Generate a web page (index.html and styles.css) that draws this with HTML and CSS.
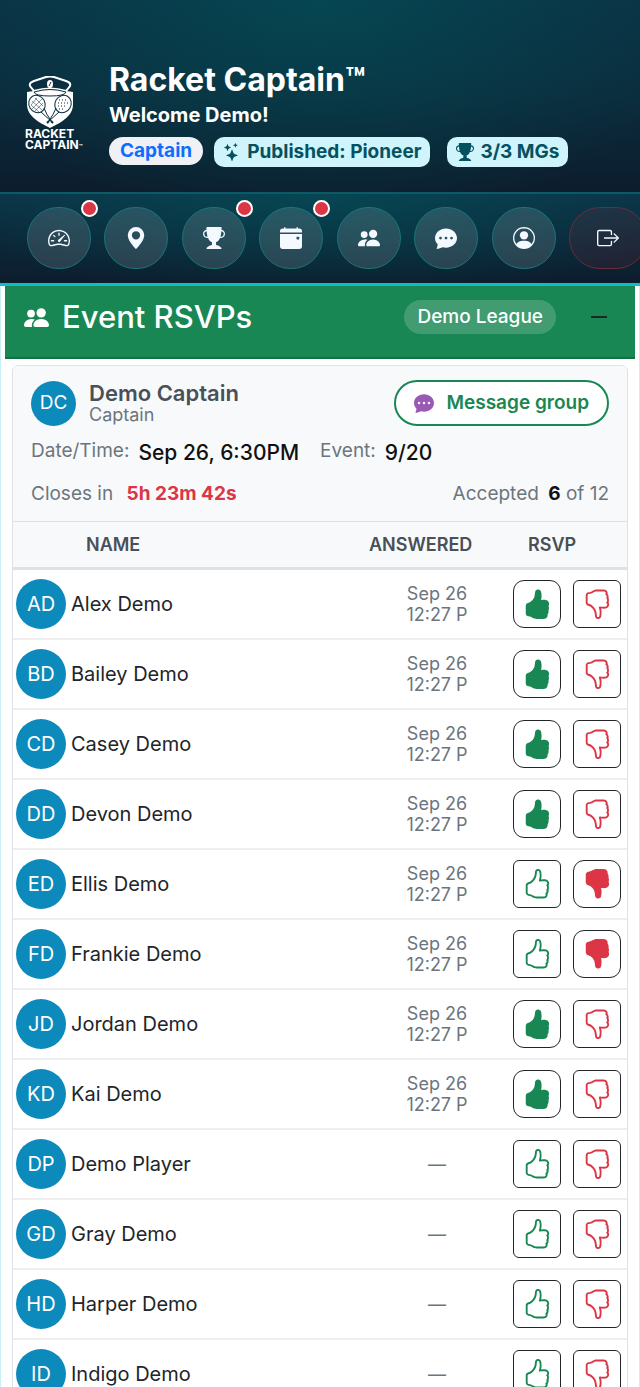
FILE: index.html
```html
<!DOCTYPE html>
<html lang="en">
<head>
    <meta charset="utf-8">
    <meta name="viewport" content="width=device-width, initial-scale=1.0">
    <title>Racket Captain</title>
    <link rel="stylesheet" href="styles.css">
</head>
<body>
    <!-- icon sprite -->
    <svg class="sprite" aria-hidden="true">
        <symbol id="i-stars" viewBox="0 0 16 16"><path d="M7.657 6.247c.11-.33.576-.33.686 0l.645 1.937a2.89 2.89 0 0 0 1.829 1.828l1.936.645c.33.11.33.576 0 .686l-1.937.645a2.89 2.89 0 0 0-1.828 1.829l-.645 1.936a.361.361 0 0 1-.686 0l-.645-1.937a2.89 2.89 0 0 0-1.828-1.828l-1.937-.645a.361.361 0 0 1 0-.686l1.937-.645a2.89 2.89 0 0 0 1.828-1.828zM3.794 1.148a.217.217 0 0 1 .412 0l.387 1.162c.173.518.579.924 1.097 1.097l1.162.387a.217.217 0 0 1 0 .412l-1.162.387A1.73 1.73 0 0 0 4.593 5.69l-.387 1.162a.217.217 0 0 1-.412 0L3.407 5.69A1.73 1.73 0 0 0 2.31 4.593l-1.162-.387a.217.217 0 0 1 0-.412l1.162-.387A1.73 1.73 0 0 0 3.407 2.31zM10.863.099a.145.145 0 0 1 .274 0l.258.774c.115.346.386.617.732.732l.774.258a.145.145 0 0 1 0 .274l-.774.258a1.16 1.16 0 0 0-.732.732l-.258.774a.145.145 0 0 1-.274 0l-.258-.774a1.16 1.16 0 0 0-.732-.732L9.1 2.137a.145.145 0 0 1 0-.274l.774-.258c.346-.115.617-.386.732-.732z"/></symbol>
        <symbol id="i-trophy" viewBox="0 0 16 16"><path d="M2.5.5A.5.5 0 0 1 3 0h10a.5.5 0 0 1 .5.5q0 .807-.034 1.536a3 3 0 1 1-1.133 5.89c-.79 1.865-1.878 2.777-2.833 3.011v2.173l1.425.356c.194.048.377.135.537.255L13.3 15.1a.5.5 0 0 1-.3.9H3a.5.5 0 0 1-.3-.9l1.838-1.379c.16-.12.343-.207.537-.255L6.5 13.11v-2.173c-.955-.234-2.043-1.146-2.833-3.012a3 3 0 1 1-1.132-5.89A33 33 0 0 1 2.5.5m.099 2.54a2 2 0 0 0 .72 3.935c-.333-1.05-.588-2.346-.72-3.935m10.083 3.935a2 2 0 0 0 .72-3.935c-.133 1.59-.388 2.885-.72 3.935"/></symbol>
        <symbol id="i-speed" viewBox="0 0 16 16"><path d="M8 4a.5.5 0 0 1 .5.5V6a.5.5 0 0 1-1 0V4.5A.5.5 0 0 1 8 4M3.732 5.732a.5.5 0 0 1 .707 0l.915.914a.5.5 0 1 1-.708.708l-.914-.915a.5.5 0 0 1 0-.707M2 10a.5.5 0 0 1 .5-.5h1.586a.5.5 0 0 1 0 1H2.5A.5.5 0 0 1 2 10m9.5 0a.5.5 0 0 1 .5-.5h1.5a.5.5 0 0 1 0 1H12a.5.5 0 0 1-.5-.5m.754-4.246a.39.39 0 0 0-.527-.02L7.547 9.31a.91.91 0 1 0 1.302 1.258l3.434-4.297a.39.39 0 0 0-.029-.518z"/><path fill-rule="evenodd" d="M0 10a8 8 0 1 1 15.547 2.661c-.442 1.253-1.845 1.602-2.932 1.25C11.309 13.488 9.475 13 8 13c-1.474 0-3.31.488-4.615.911-1.087.352-2.49.003-2.932-1.25A8 8 0 0 1 0 10m8-7a7 7 0 0 0-6.603 9.329c.203.575.923.876 1.68.63C4.397 12.533 6.358 12 8 12s3.604.532 4.923.96c.757.245 1.477-.056 1.68-.631A7 7 0 0 0 8 3"/></symbol>
        <symbol id="i-geo" viewBox="0 0 16 16"><path d="M8 16s6-5.686 6-10A6 6 0 0 0 2 6c0 4.314 6 10 6 10m0-7a3 3 0 1 1 0-6 3 3 0 0 1 0 6"/></symbol>
        <symbol id="i-calendar" viewBox="0 0 16 16"><path d="M4 .5a.5.5 0 0 0-1 0V1H2a2 2 0 0 0-2 2v1h16V3a2 2 0 0 0-2-2h-1V.5a.5.5 0 0 0-1 0V1H4zM16 14V5H0v9a2 2 0 0 0 2 2h12a2 2 0 0 0 2-2m-3.5-7h1a.5.5 0 0 1 .5.5v1a.5.5 0 0 1-.5.5h-1a.5.5 0 0 1-.5-.5v-1a.5.5 0 0 1 .5-.5"/></symbol>
        <symbol id="i-people" viewBox="0 0 16 16"><path d="M7 14s-1 0-1-1 1-4 5-4 5 3 5 4-1 1-1 1zm4-6a3 3 0 1 0 0-6 3 3 0 0 0 0 6m-5.784 6A2.24 2.24 0 0 1 5 13c0-1.355.68-2.75 1.936-3.72A6.3 6.3 0 0 0 5 9c-4 0-5 3-5 4s1 1 1 1zM4.5 8a2.5 2.5 0 1 0 0-5 2.5 2.5 0 0 0 0 5"/></symbol>
        <symbol id="i-chat" viewBox="0 0 16 16"><path d="M16 8c0 3.866-3.582 7-8 7a9 9 0 0 1-2.347-.306c-.584.296-1.925.864-4.181 1.234-.2.032-.352-.176-.273-.362.354-.836.674-1.95.77-2.966C.744 11.37 0 9.76 0 8c0-3.866 3.582-7 8-7s8 3.134 8 7M5 8a1 1 0 1 0-2 0 1 1 0 0 0 2 0m4 0a1 1 0 1 0-2 0 1 1 0 0 0 2 0m3 1a1 1 0 1 0 0-2 1 1 0 0 0 0 2"/></symbol>
        <symbol id="i-person" viewBox="0 0 16 16"><path d="M11 6a3 3 0 1 1-6 0 3 3 0 0 1 6 0"/><path fill-rule="evenodd" d="M0 8a8 8 0 1 1 16 0A8 8 0 0 1 0 8m8-7a7 7 0 0 0-5.468 11.37C3.242 11.226 4.805 10 8 10s4.757 1.225 5.468 2.37A7 7 0 0 0 8 1"/></symbol>
        <symbol id="i-logout" viewBox="0 0 16 16"><path d="M10 12.5a.5.5 0 0 1-.5.5h-8a.5.5 0 0 1-.5-.5v-9a.5.5 0 0 1 .5-.5h8a.5.5 0 0 1 .5.5v2a.5.5 0 0 0 1 0v-2A1.5 1.5 0 0 0 9.5 2h-8A1.5 1.5 0 0 0 0 3.5v9A1.5 1.5 0 0 0 1.5 14h8a1.5 1.5 0 0 0 1.5-1.5v-2a.5.5 0 0 0-1 0z"/><path d="M15.854 8.354a.5.5 0 0 0 0-.708l-3-3a.5.5 0 0 0-.708.708L14.293 7.5H5.5a.5.5 0 0 0 0 1h8.793l-2.147 2.146a.5.5 0 0 0 .708.708z"/></symbol>
        <symbol id="i-thumb" viewBox="0 0 16 16"><path d="M8.864.046C7.908-.193 7.02.53 6.956 1.466c-.072 1.051-.23 2.016-.428 2.59-.125.36-.479 1.013-1.04 1.639-.557.623-1.282 1.178-2.131 1.41C2.685 7.288 2 7.87 2 8.72v4.001c0 .845.682 1.464 1.448 1.545 1.07.114 1.564.415 2.068.723l.048.03c.272.165.578.348.97.484.397.136.861.217 1.466.217h3.5c.937 0 1.599-.477 1.934-1.064a1.86 1.86 0 0 0 .254-.912c0-.152-.023-.312-.077-.464.201-.263.38-.578.488-.901.11-.33.172-.762.004-1.149.069-.13.12-.269.159-.403.077-.27.113-.568.113-.857 0-.288-.036-.585-.113-.856a2 2 0 0 0-.138-.362 1.9 1.9 0 0 0 .234-1.734c-.206-.592-.682-1.1-1.2-1.272-.847-.282-1.803-.276-2.516-.211a10 10 0 0 0-.443.05 9.4 9.4 0 0 0-.062-4.509A1.38 1.38 0 0 0 9.125.111zM11.5 14.721H8c-.51 0-.863-.069-1.14-.164-.281-.097-.506-.228-.776-.393l-.04-.024c-.555-.339-1.198-.731-2.49-.868-.333-.036-.554-.29-.554-.55V8.72c0-.254.226-.543.62-.65 1.095-.3 1.977-.996 2.614-1.708.635-.71 1.064-1.475 1.238-1.978.243-.7.407-1.768.482-2.85.025-.362.36-.594.667-.518l.262.066c.16.04.258.143.288.255a8.34 8.34 0 0 1-.145 4.725.5.5 0 0 0 .595.644l.003-.001.014-.003.058-.014a9 9 0 0 1 1.036-.157c.663-.06 1.457-.054 2.11.164.175.058.45.3.57.65.107.308.087.67-.266 1.022l-.353.353.353.354c.043.043.105.141.154.315.048.167.075.37.075.581 0 .212-.027.414-.075.582-.05.174-.111.272-.154.315l-.353.353.353.354c.047.047.109.177.005.488a2.2 2.2 0 0 1-.505.805l-.353.353.353.354c.006.005.041.05.041.17a.9.9 0 0 1-.121.416c-.165.288-.503.56-1.066.56z"/></symbol>
        <symbol id="i-thumb-fill" viewBox="0 0 16 16"><path d="M6.956 1.745C7.021.81 7.908.087 8.864.325l.261.066c.463.116.874.456 1.012.965.22.816.533 2.511.062 4.51a10 10 0 0 1 .443-.051c.713-.065 1.669-.072 2.516.21.518.173.994.681 1.2 1.273.184.532.16 1.162-.234 1.733q.086.18.138.363c.077.27.113.567.113.856s-.036.586-.113.856c-.039.135-.09.273-.16.404.169.387.107.819-.003 1.148a3.2 3.2 0 0 1-.488.901c.054.152.076.312.076.465 0 .305-.089.625-.253.912C13.1 15.522 12.437 16 11.5 16H8c-.605 0-1.07-.081-1.466-.218a4.8 4.8 0 0 1-.97-.484l-.048-.03c-.504-.307-.999-.609-2.068-.722C2.682 14.464 2 13.846 2 13V9c0-.85.685-1.432 1.357-1.615.849-.232 1.574-.787 2.132-1.41.56-.627.914-1.28 1.039-1.639.199-.575.356-1.539.428-2.59z"/></symbol>
    </svg>

    <header class="top">
        <div class="logo">
            <svg class="logo-mark" viewBox="0 0 48 52" aria-hidden="true">
                <path d="M1 16q23-5 46 0v12c0 12-11 18-23 24C12 46 1 40 1 28z" fill="#fff"/>
                <path d="M4 10C3 7 5 6 8 5l12-4q4-1 8 0l12 4c3 1 5 2 4 5l-4 5q-16-5-32 0z" fill="#0b2f40" stroke="#fff" stroke-width="2"/>
                <path d="M8 16q16-5 32 0-1 4-16 4T8 16z" fill="#fff" stroke="#0b2c3d"/>
                <ellipse cx="24" cy="8" rx="3" ry="4" fill="#fff"/>
                <path d="m25 6-2 4" stroke="#0b2c3d"/>
                <g fill="none" stroke="#0b2c3d">
                    <ellipse cx="11" cy="28" rx="8" ry="9" transform="rotate(-30 11 28)"/>
                    <ellipse cx="37" cy="28" rx="8" ry="9" transform="rotate(30 37 28)"/>
                    <path d="M15 36l11 10M18 32q2 6 8 14M33 36l-11 10M30 32q-2 6-8 14"/>
                    <path d="m6 25 10 9M5 29l8 7M9 22l8 8M6 33l10-10M9 35l8-8M5 29l6-7" stroke-width=".5"/>
                    <path d="M33 24h8M32 27h10M32 30h9M33 33h6" stroke-dasharray="1 2"/>
                    <path d="m25 45 2 2M23 45l-2 2" stroke-width="2"/>
                </g>
            </svg>
            <div class="logo-text">RACKET<br>CAPTAIN<span class="tm">™</span></div>
        </div>
        <div class="intro">
            <h1>Racket Captain™</h1>
            <p class="welcome">Welcome Demo!</p>
            <div class="tags">
                <span class="tag tag-role">Captain</span>
                <span class="tag tag-info"><svg><use href="#i-stars"/></svg>Published: Pioneer</span>
                <span class="tag tag-info tag-mg"><svg><use href="#i-trophy"/></svg>3/3 MGs</span>
            </div>
        </div>
    </header>

    <nav class="nav">
        <div class="nav-row">
            <a href="#" class="nav-btn" aria-label="Dashboard"><svg><use href="#i-speed"/></svg><span class="dot"></span></a>
            <a href="#" class="nav-btn" aria-label="Locations"><svg><use href="#i-geo"/></svg></a>
            <a href="#" class="nav-btn" aria-label="Leagues"><svg><use href="#i-trophy"/></svg><span class="dot"></span></a>
            <a href="#" class="nav-btn" aria-label="Events"><svg><use href="#i-calendar"/></svg><span class="dot"></span></a>
            <a href="#" class="nav-btn" aria-label="Players"><svg><use href="#i-people"/></svg></a>
            <a href="#" class="nav-btn" aria-label="Messages"><svg><use href="#i-chat"/></svg></a>
            <a href="#" class="nav-btn" aria-label="Profile"><svg><use href="#i-person"/></svg></a>
            <a href="#" class="nav-btn nav-logout" aria-label="Log out"><svg><use href="#i-logout"/></svg></a>
        </div>
    </nav>

    <main class="page">
        <div class="panel-head">
            <svg><use href="#i-people"/></svg>
            <h2>Event RSVPs</h2>
            <span class="league">Demo League</span>
            <button type="button" class="collapse" aria-label="Collapse"></button>
        </div>

        <section class="card">
            <div class="card-head">
                <div class="captain">
                    <span class="avatar avatar-sm">DC</span>
                    <div class="captain-name">
                        <strong>Demo Captain</strong>
                        <span>Captain</span>
                    </div>
                    <button type="button" class="msg-btn"><svg><use href="#i-chat"/></svg>Message group</button>
                </div>
                <div class="facts">
                    <span class="label">Date/Time:</span><span class="value">Sep 26, 6:30PM</span>
                    <span class="label label-event">Event:</span><span class="value">9/20</span>
                </div>
                <div class="status">
                    <span>Closes in <b class="timer">5h 23m 42s</b></span>
                    <span>Accepted <b class="count">6</b> of 12</span>
                </div>
            </div>
            <table class="rsvp">
                <thead>
                    <tr>
                        <th class="col-avatar"></th>
                        <th class="col-name">NAME</th>
                        <th class="col-answered">ANSWERED</th>
                        <th class="col-rsvp">RSVP</th>
                    </tr>
                </thead>
                <tbody id="players"></tbody>
            </table>
        </section>
    </main>

    <script src="script.js"></script>
</body>
</html>
```
FILE: styles.css
```css
* {
    box-sizing: border-box;
}
body {
    margin: 0;
    font-family: Inter, "Liberation Sans", sans-serif;
    font-size: 20px;
    line-height: 24px;
    color: #212529;
    background: #fff;
    overflow-x: hidden;
}
svg {
    fill: currentColor;
    flex: none;
}
h1, h2, p {
    margin: 0;
}
.sprite {
    display: none;
}

/* header */
.top {
    display: flex;
    gap: 26px;
    padding: 61px 24px 25px;
    color: #fff;
    background: radial-gradient(ellipse at 50% 0, rgba(0, 90, 95, .5), transparent 85%), linear-gradient(#0a3245, #0b2c3d 50%, #0c1d2d);
}
.logo {
    width: 59px;
    padding-top: 15px;
}
.logo-mark {
    display: block;
    width: 48px;
    height: 52px;
    margin-left: 2px;
}
.logo-text {
    margin-left: 1px;
    font-size: 12px;
    line-height: 11px;
    font-weight: 700;
    white-space: nowrap;
}
.tm {
    font-size: 6px;
}
h1 {
    font-size: 32px;
    line-height: 38px;
    font-weight: 700;
}
.welcome {
    font-weight: 700;
    line-height: 24px;
    margin: 4px 0 10px;
}
.tags {
    display: flex;
    align-items: flex-start;
    gap: 11px;
    font-size: 19px;
    font-weight: 700;
    white-space: nowrap;
}
.tag {
    display: flex;
    align-items: center;
    gap: 6px;
    height: 30px;
    padding: 0 9px;
    border-radius: 10px;
}
.tag svg {
    width: 18px;
    height: 18px;
}
.tag-role {
    height: 28px;
    padding: 0 11px;
    border-radius: 14px;
    color: #0d6efd;
    background: #f0f1f4;
}
.tag-info {
    color: #055160;
    background: #cff4fc;
}
.tag-mg {
    margin-left: 6px;
}

/* icon nav */
.nav {
    overflow: hidden;
    border-top: 2px solid #0c5968;
    border-bottom: 3px solid #0fbcc8;
    background: radial-gradient(ellipse at 50% 0, rgba(0, 90, 95, .5), transparent 85%), linear-gradient(#0b3347, #0c1d2d);
}
.nav-row {
    display: flex;
    justify-content: space-between;
    margin-right: -7px;
    padding: 13px 0 14px 27px;
}
.nav-btn {
    position: relative;
    display: flex;
    align-items: center;
    justify-content: center;
    flex: none;
    width: 64px;
    height: 62px;
    border: 1px solid #1a7479;
    border-radius: 32px;
    color: #f4f8ff;
    background: rgba(255, 255, 255, .13);
}
.nav-btn svg {
    width: 22px;
    height: 22px;
}
.nav-logout {
    width: 78px;
    border-color: #6a2c3e;
    background: rgba(220, 53, 69, .1);
}
.dot {
    position: absolute;
    top: -8px;
    right: -8px;
    width: 17px;
    height: 17px;
    border: 2px solid #fff;
    border-radius: 50%;
    background: #dc3545;
}

/* event panel */
.page {
    padding: 0 4px;
    border-left: 1px solid #c9f0f8;
    border-right: 1px solid #c9f0f8;
}
.panel-head {
    display: flex;
    align-items: center;
    height: 73px;
    padding: 0 28px 9px 19px;
    color: #fff;
    background: #198754;
    border-bottom: 2px solid #14713f;
}
.panel-head svg {
    width: 25px;
    height: 25px;
}
h2 {
    flex: 1;
    margin-left: 13px;
    font-size: 31px;
    line-height: 38px;
    font-weight: 500;
}
.league {
    padding: 5px 13px;
    border-radius: 17px;
    font-size: 19px;
    font-weight: 500;
    background: rgba(255, 255, 255, .18);
}
.collapse {
    width: 16px;
    height: 2px;
    margin-left: 35px;
    padding: 0;
    border: 0;
    background: #212529;
}
.card {
    margin: 6px 7px 0;
    border: 1px solid #dee2e6;
    border-radius: 6px;
}
.card-head {
    padding: 14px 18px 15px;
    font-size: 19px;
    color: #6c757d;
    background: #f8f9fb;
    border-bottom: 1px solid #dee2e6;
    border-radius: 6px 6px 0 0;
}
.captain {
    display: flex;
    align-items: center;
}
.avatar {
    display: flex;
    align-items: center;
    justify-content: center;
    width: 50px;
    height: 50px;
    border-radius: 50%;
    color: #fff;
    background: #0d8abc;
}
.avatar-sm {
    width: 45px;
    height: 45px;
}
.captain-name {
    display: flex;
    flex-direction: column;
    flex: 1;
    margin-left: 13px;
}
.captain-name strong {
    font-size: 22px;
    font-weight: 600;
    color: #495057;
}
.captain-name span {
    font-size: 18px;
    line-height: 20px;
}
.msg-btn {
    display: flex;
    align-items: center;
    gap: 12px;
    height: 46px;
    padding: 0 18px;
    border: 2px solid #198754;
    border-radius: 23px;
    font: inherit;
    font-weight: 600;
    color: #198754;
    background: #fff;
}
.msg-btn svg {
    width: 20px;
    height: 20px;
    color: #9b59b6;
}
.facts {
    display: flex;
    align-items: flex-start;
    margin-top: 13px;
}
.value {
    margin-left: 9px;
    font-size: 21px;
    line-height: 28px;
    font-weight: 500;
    color: #111;
}
.label-event {
    margin-left: 21px;
}
.status {
    display: flex;
    justify-content: space-between;
    margin-top: 15px;
}
.timer {
    margin-left: 8px;
    font-weight: 700;
    color: #dc3545;
}
.count {
    margin-left: 4px;
    color: #111;
}

/* rsvp table */
.rsvp {
    width: 100%;
    table-layout: fixed;
    border-collapse: separate;
    border-spacing: 0;
}
.rsvp th {
    height: 48px;
    padding: 0 15px;
    font-size: 18px;
    font-weight: 600;
    text-align: left;
    color: #495057;
    background: #f8f9fb;
    border-bottom: 3px solid #dee2e6;
}
.rsvp td {
    height: 70px;
    padding: 0;
    border-bottom: 2px solid #eceef0;
}
.rsvp .col-avatar {
    width: 57px;
    padding: 0 0 0 3px;
}
.rsvp th.col-name {
    padding: 0 16px;
}
.rsvp th.col-answered {
    width: 152px;
    padding: 0 8px;
}
.rsvp .col-rsvp {
    width: 114px;
}
.rsvp td.name {
    padding-left: 1px;
}
.answered {
    font-size: 18px;
    line-height: 21px;
    text-align: center;
    color: #6c757d;
}
.votes {
    display: flex;
    gap: 12px;
}
.vote {
    display: flex;
    align-items: center;
    justify-content: center;
    width: 48px;
    height: 48px;
    padding: 0;
    border: 1px solid #212529;
    border-radius: 6px;
    background: #fff;
}
.vote svg {
    width: 30px;
    height: 30px;
}
.vote.picked {
    border-radius: 11px;
}
.up {
    color: #198754;
}
.down {
    color: #dc3545;
}
.down svg {
    transform: scaleY(-1);
}
```
FILE: script.js
```js
const players = [
    ["AD", "Alex Demo", "yes"],
    ["BD", "Bailey Demo", "yes"],
    ["CD", "Casey Demo", "yes"],
    ["DD", "Devon Demo", "yes"],
    ["ED", "Ellis Demo", "no"],
    ["FD", "Frankie Demo", "no"],
    ["JD", "Jordan Demo", "yes"],
    ["KD", "Kai Demo", "yes"],
    ["DP", "Demo Player", ""],
    ["GD", "Gray Demo", ""],
    ["HD", "Harper Demo", ""],
    ["ID", "Indigo Demo", ""]
];

function voteButton(dir, picked, label) {
    const icon = picked ? "i-thumb-fill" : "i-thumb";
    return `<button type="button" class="vote ${dir}${picked ? " picked" : ""}" aria-label="${label}"><svg><use href="#${icon}"/></svg></button>`;
}

document.getElementById("players").innerHTML = players.map(([initials, name, vote]) => `
    <tr>
        <td class="col-avatar"><span class="avatar">${initials}</span></td>
        <td class="name">${name}</td>
        <td class="answered">${vote ? "Sep 26<br>12:27 P" : "—"}</td>
        <td>
            <div class="votes">
                ${voteButton("up", vote === "yes", "Accept")}
                ${voteButton("down", vote === "no", "Decline")}
            </div>
        </td>
    </tr>`).join("");
```
